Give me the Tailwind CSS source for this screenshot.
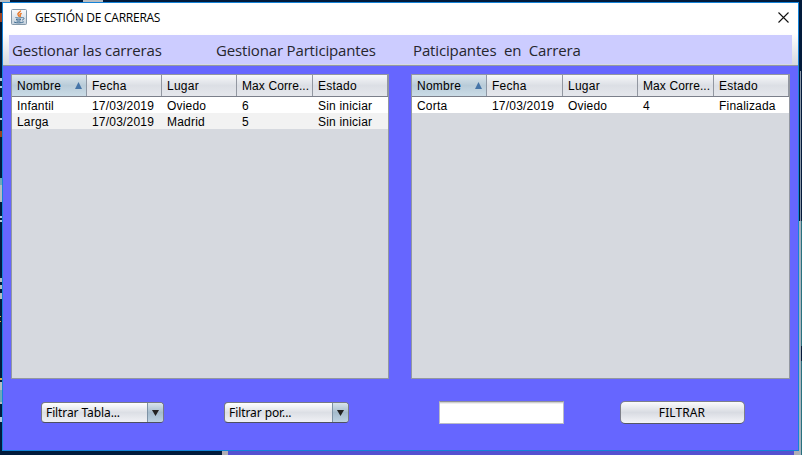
<!DOCTYPE html>
<html lang="es">
<head>
<meta charset="utf-8">
<title>GESTIÓN DE CARRERAS</title>
<script src="https://cdn.jsdelivr.net/npm/@tailwindcss/browser@4"></script>
</head>
<body class="relative w-[802px] h-[455px] overflow-hidden bg-[#021b3b] px-[2px] pt-[2px] font-['Liberation_Sans',sans-serif] text-[13px] text-black whitespace-nowrap">
<!-- desktop behind the window -->
<svg class="absolute inset-0" width="802" height="455" viewBox="0 0 802 455" shape-rendering="crispEdges">
  <path fill="#b8bcc0" d="M0 0h10v2H0zM83 0h20v2H83zM0 180h2v22H0zM0 278h2v4H0zM0 285h2v4H0zM0 293h2v6H0zM0 382h2v22H0z"/>
  <path fill="#6fa9b8" d="M0 178h2v7H0zM0 390h2v12H0z"/>
  <path fill="#9c4220" d="M0 13h2v9H0zM0 131h2v6H0z"/>
  <path fill="#b7c7da" d="M0 78h2v3H0zM0 86h2v2H0zM0 97h2v3H0zM0 118h2v2H0zM0 216h2v2H0zM0 220h2v2H0zM0 417h2v5H0z"/>
  <path fill="#e0ae48" d="M0 316h1v1H0zM0 321h1v1H0zM0 378h2v2H0z"/>
  <path fill="#5550d0" d="M228 451h566v4H228z"/>
  <path fill="#b0afb5" d="M222 451h6v4h-6zM794 451h6v4h-6z"/>
  <path fill="#8b98a8" d="M800 71h1v150h-1z"/>
  <path fill="#a9b4bd" d="M799 221h2v234h-2z"/>
  <path fill="#28717f" d="M801 221h1v125h-1zM801 361h1v94h-1z"/>
</svg>

<main class="relative flex flex-col w-[797px] h-[449px] border border-[#1583d8] bg-[#6666ff]">
  <header class="flex items-center h-[30px] bg-white pl-2 pr-[9px] pb-[2px] font-['Open_Sans','Noto_Sans',sans-serif] text-[12px]">
    <svg width="16" height="16" viewBox="0 0 16 16">
      <defs><linearGradient id="ic" x2="0" y2="1"><stop stop-color="#fafbfc"/><stop offset="1" stop-color="#c3d0dc"/></linearGradient></defs>
      <rect x=".5" y=".5" width="15" height="15" rx="1" fill="url(#ic)" stroke="#8499aa"/>
      <path d="M9.500 1.500c.5 1.800-3.500 2.200-2.500 4.200.3.700 1 1.100 1 2.100M10.700 4.300C8.900 5 8.600 5.500 9.200 6.300c.4.600.1 1.200-.5 1.600" fill="none" stroke="#e87422" stroke-width="1.400"/>
      <path d="M4.500 8.500c1.500.7 4.500.7 6.300 0M5 10.300c1.500.6 3.600.6 5 0M5.500 11.900c1.300.4 2.800.4 4 0M11.300 8.600c2.300-.5 2.200 1.900-.2 2.500M3 13c2.500 1.200 7 1.200 9.800-.2" fill="none" stroke="#3f6c91"/>
    </svg>
    <h1 class="ml-2 pt-[2px] tracking-[-0.26px]">GESTIÓN DE CARRERAS</h1>
    <svg class="ml-auto" width="11" height="11" viewBox="0 0 11 11"><path d="M.5.5l10 10M10.500.5l-10 10" stroke="#111" stroke-width="1.100"/></svg>
  </header>

  <nav class="h-[33px] px-[6px] pt-[2px] bg-linear-to-b from-white to-[#d6d9df] border-b border-[#9297a1]">
    <div class="flex h-[29px] bg-[#ccccff] pl-[3px] font-['Open_Sans','Noto_Sans',sans-serif] text-[15px] leading-[31px] text-[#26262e]">
      <span class="w-[204px] tracking-[-0.16px]">Gestionar las carreras</span>
      <span class="w-[197px] tracking-[-0.16px]">Gestionar Participantes</span>
      <span class="whitespace-pre tracking-[-0.14px]">Paticipantes  en  Carrera</span>
    </div>
  </nav>

  <section class="flex gap-[22px] pl-2 pt-2 text-[12px]">
    <div class="w-[378px] h-[305px] border border-[#9297a1] bg-[#d6d9df]">
      <div class="grid grid-rows-[21px] grid-cols-[75px_75px_75px_76px_75px] h-[22px] border-b border-[#7b7f8a] bg-linear-to-b from-[#f7f8fa] via-[#dcdfe5] to-[#e5e7ec] leading-[23px] tracking-[0.25px]">
        <div class="flex items-start justify-between border-r border-[#8f98a5] bg-linear-to-b from-[#dbe5ec] via-[#b8cbd8] to-[#cbdce7] pl-[5px] pr-1"><span>Nombre</span><svg class="mt-[7px]" width="7" height="7" viewBox="0 0 7 7"><path d="M3.500 0L7 7H0z" fill="#4574a8"/></svg></div>
        <div class="border-r border-[#9297a1] pl-[5px]">Fecha</div>
        <div class="border-r border-[#9297a1] pl-[5px]">Lugar</div>
        <div class="border-r border-[#9297a1] pl-[5px] tracking-[0.1px]">Max Corre...</div>
        <div class="border-r border-[#9297a1] pl-[5px]">Estado</div>
      </div>
      <div class="grid grid-cols-[75px_75px_75px_76px_75px] h-4 bg-white leading-[19px] tracking-[0.2px] *:pl-[5px]">
        <span>Infantil</span><span>17/03/2019</span><span>Oviedo</span><span>6</span><span>Sin iniciar</span>
      </div>
      <div class="grid grid-cols-[75px_75px_75px_76px_75px] h-4 bg-[#f2f2f2] leading-[19px] tracking-[0.2px] *:pl-[5px]">
        <span>Larga</span><span>17/03/2019</span><span>Madrid</span><span>5</span><span>Sin iniciar</span>
      </div>
    </div>
    <div class="w-[379px] h-[305px] border border-[#9297a1] bg-[#d6d9df]">
      <div class="grid grid-rows-[21px] grid-cols-[75px_76px_75px_76px_75px] h-[22px] border-b border-[#7b7f8a] bg-linear-to-b from-[#f7f8fa] via-[#dcdfe5] to-[#e5e7ec] leading-[23px] tracking-[0.25px]">
        <div class="flex items-start justify-between border-r border-[#8f98a5] bg-linear-to-b from-[#dbe5ec] via-[#b8cbd8] to-[#cbdce7] pl-[5px] pr-1"><span>Nombre</span><svg class="mt-[7px]" width="7" height="7" viewBox="0 0 7 7"><path d="M3.500 0L7 7H0z" fill="#4574a8"/></svg></div>
        <div class="border-r border-[#9297a1] pl-[5px]">Fecha</div>
        <div class="border-r border-[#9297a1] pl-[5px]">Lugar</div>
        <div class="border-r border-[#9297a1] pl-[5px] tracking-[0.1px]">Max Corre...</div>
        <div class="border-r border-[#9297a1] pl-[5px]">Estado</div>
      </div>
      <div class="grid grid-cols-[75px_76px_75px_76px_75px] h-4 bg-white leading-[19px] tracking-[0.2px] *:pl-[5px]">
        <span>Corta</span><span>17/03/2019</span><span>Oviedo</span><span>4</span><span>Finalizada</span>
      </div>
    </div>
  </section>

  <footer class="flex items-center pl-[38px] mt-[22px] h-[23px] font-['Noto_Sans','Open_Sans',sans-serif] text-[12px]">
    <div class="flex w-[123px] h-[21px] rounded-[4px] border border-[#777a83] border-b-[#4d5060] bg-linear-to-b from-white via-[#dcdfe5] to-[#f0f1f5] overflow-hidden">
      <span class="grow pl-1 leading-[20px] tracking-[-0.1px]">Filtrar Tabla...</span>
      <span class="flex items-center justify-center w-4 border-l border-[#7d92a5] bg-linear-to-b from-[#d9e4ec] via-[#a5bbcc] to-[#bdd2e2]"><svg width="7" height="6" viewBox="0 0 7 6"><path d="M0 0h7L3.500 6z" fill="#222"/></svg></span>
    </div>
    <div class="flex ml-[60px] w-[125px] h-[21px] rounded-[4px] border border-[#777a83] border-b-[#4d5060] bg-linear-to-b from-white via-[#dcdfe5] to-[#f0f1f5] overflow-hidden">
      <span class="grow pl-1 leading-[20px] tracking-[-0.08px]">Filtrar por...</span>
      <span class="flex items-center justify-center w-4 border-l border-[#7d92a5] bg-linear-to-b from-[#d9e4ec] via-[#a5bbcc] to-[#bdd2e2]"><svg width="7" height="6" viewBox="0 0 7 6"><path d="M0 0h7L3.500 6z" fill="#222"/></svg></span>
    </div>
    <input type="text" aria-label="Filtro" class="ml-[90px] w-[125px] h-[23px] border border-[#b9bbc7] border-t-[#8d8f99] bg-white shadow-[inset_0_1px_0_#d0d0d0,inset_0_2px_0_#eee]">
    <button class="ml-[56px] w-[125px] h-[23px] rounded-[5px] border border-[#7d7f89] border-b-[#555766] bg-linear-to-b from-[#fbfbfc] via-[#d8dbe2] to-[#f4f5f8] pr-[1px] leading-[21px] tracking-[0.1px]">FILTRAR</button>
  </footer>
</main>
</body>
</html>
